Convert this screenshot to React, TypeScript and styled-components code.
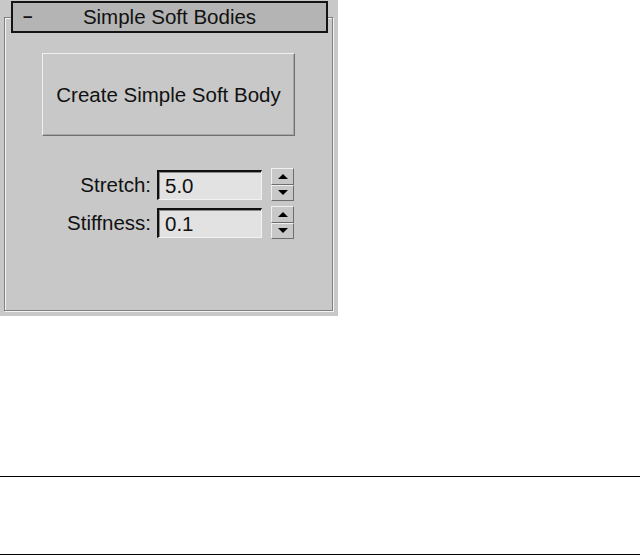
import React from 'react'
import styled, { createGlobalStyle } from 'styled-components'

const GlobalStyle = createGlobalStyle`
  html, body {
    margin: 0;
    padding: 0;
    background: #ffffff;
  }
  body {
    font-family: "Liberation Sans", Arial, sans-serif;
  }
`

const Page = styled.div`
  display: flex;
  flex-direction: column;
  width: 641px;
  height: 555px;
  overflow: hidden;
`

const Panel = styled.div`
  display: flex;
  flex-direction: column;
  box-sizing: border-box;
  width: 338px;
  height: 316px;
  padding: 17px 5px 5px 4px;
  background: #c8c8c8;
`

const Frame = styled.div`
  flex: 1;
  display: flex;
  flex-direction: column;
  border: 1px solid #808080;
  box-shadow: 1px 1px 0 #f4f4f4, inset 1px 1px 0 #f4f4f4;
`

const TitleBar = styled.div`
  display: grid;
  grid-template-columns: 1fr auto 1fr;
  align-items: center;
  box-sizing: border-box;
  height: 32px;
  margin: -17px 4px 0 6px;
  padding: 0 10px;
  background: #b4b4b4;
  border: 2px solid #141414;
  font-size: 20.5px;
  color: #111;
`

const Collapse = styled.span`
  justify-self: start;
  font-size: 17px;
  font-weight: bold;
  line-height: 1;
  margin-top: -2px;
`

const Title = styled.span`
  line-height: 1;
`

const BigButton = styled.button`
  align-self: center;
  box-sizing: border-box;
  width: 253px;
  height: 83px;
  margin-top: 20px;
  padding: 0;
  background: #c8c8c8;
  border: 1px solid;
  border-color: #f0f0f0 #707070 #707070 #f0f0f0;
  box-shadow: inset -1px -1px 0 #a8a8a8;
  font-family: "Liberation Sans", Arial, sans-serif;
  font-size: 20.5px;
  color: #111;
`

const Params = styled.div`
  display: flex;
  flex-direction: column;
  gap: 5px;
  margin: 32px 38px 0 0;
`

const ParamRow = styled.div`
  display: flex;
  justify-content: flex-end;
  align-items: center;
  height: 33px;
`

const Label = styled.span`
  font-size: 20.5px;
  color: #111;
  margin-right: 6px;
`

const Field = styled.div`
  display: flex;
  align-items: center;
  box-sizing: border-box;
  width: 105px;
  height: 30px;
  padding: 1px 0 0 6px;
  background: #e2e2e2;
  border-style: solid;
  border-width: 2px 1px 1px 2px;
  border-color: #101010 #f2f2f2 #f2f2f2 #101010;
  box-shadow: inset 1px 1px 0 #8a8a8a;
  font-size: 20.5px;
  color: #111;
`

const Spinner = styled.div`
  display: flex;
  flex-direction: column;
  width: 23px;
  height: 33px;
  margin-left: 9px;
`

const SpinHalf = styled.div`
  flex: 1;
  display: flex;
  align-items: center;
  justify-content: center;
  background: #c8c8c8;
  border: 1px solid;
  border-color: #f0f0f0 #6e6e6e #6e6e6e #f0f0f0;
`

const Arrow = styled.span<{ $down?: boolean }>`
  width: 0;
  height: 0;
  border-left: 5px solid transparent;
  border-right: 5px solid transparent;
  ${(p) => (p.$down ? 'border-top: 5px solid #000;' : 'border-bottom: 5px solid #000;')}
`

const Rule = styled.div<{ $gap: number }>`
  width: 640px;
  height: 1px;
  margin-top: ${(p) => p.$gap}px;
  background: #000;
`

const params = [
  { label: 'Stretch:', value: '5.0' },
  { label: 'Stiffness:', value: '0.1' },
]

export default function App() {
  return (
    <>
      <GlobalStyle />
      <Page>
        <Panel>
          <Frame>
            <TitleBar>
              <Collapse>–</Collapse>
              <Title>Simple Soft Bodies</Title>
              <span />
            </TitleBar>
            <BigButton>Create Simple Soft Body</BigButton>
            <Params>
              {params.map((p) => (
                <ParamRow key={p.label}>
                  <Label>{p.label}</Label>
                  <Field>{p.value}</Field>
                  <Spinner>
                    <SpinHalf>
                      <Arrow />
                    </SpinHalf>
                    <SpinHalf>
                      <Arrow $down />
                    </SpinHalf>
                  </Spinner>
                </ParamRow>
              ))}
            </Params>
          </Frame>
        </Panel>
        <Rule $gap={160} />
        <Rule $gap={77} />
      </Page>
    </>
  )
}
